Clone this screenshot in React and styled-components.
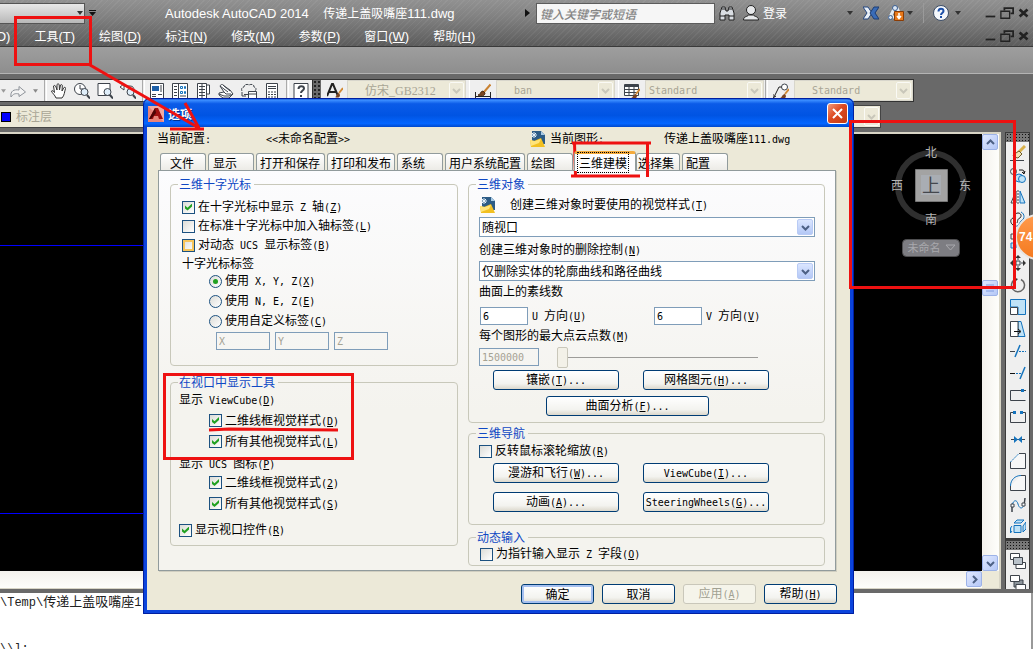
import React from "react";
import styled, { createGlobalStyle, css } from "styled-components";

const GlobalStyle = createGlobalStyle`
  *, *::before, *::after { box-sizing: border-box; }
  body { margin: 0; background: #6a6a6a; }
  button, input, select { margin: 0; font: inherit; color: inherit; }
`;

const cjk = `"Noto Sans CJK SC", sans-serif`;
const red = "#ee1111";

/* ---------- text with Latin runs and underlined access keys ---------- */

const Latin = styled.span`
  white-space: pre;
  ${(p) =>
    p.$ui
      ? css`font: 13px/16px "Liberation Sans", sans-serif;`
      : p.$large
        ? css`font: 12px/16px "Liberation Mono", monospace;`
        : css`font: 10px/16px "DejaVu Sans Mono", monospace;`}
`;

function Text({ children, ui, large }) {
  return children
    .split(/([\x20-\x7e]+)/)
    .filter(Boolean)
    .map((run, i) =>
      /^[\x20-\x7e]/.test(run) ? (
        <Latin key={i} $ui={ui} $large={large}>
          {run.split(/(&.)/).map((s, j) => (s[0] === "&" ? <u key={j}>{s[1]}</u> : s))}
        </Latin>
      ) : (
        <React.Fragment key={i}>{run}</React.Fragment>
      )
    );
}

/* ---------- application frame ---------- */

const Frame = styled.div`
  position: relative;
  display: flex;
  flex-direction: column;
  min-height: 100vh;
  overflow: hidden;
  background: #696969;
  font: 12px/16px ${cjk};
  color: #000;
`;

const Header = styled.header`
  height: 47px;
  border-bottom: 1px solid #3a3a3a;
  color: #fff;
  background:
    repeating-linear-gradient(135deg, rgba(255, 255, 255, 0.05) 0 1px, transparent 1px 4px),
    linear-gradient(#919191, #828282 35%, #5c5c5c);
`;

const TitleRow = styled.div`
  display: flex;
  align-items: center;
  height: 26px;
`;

const WorkspaceBox = styled.button`
  display: flex;
  justify-content: flex-end;
  align-items: center;
  width: 85px;
  height: 21px;
  padding: 0 1px;
  border: 1px solid #555;
  border-left: 0;
  background: linear-gradient(#e8e8e8, #b8b8b8);
`;

const PlainButton = styled.button`
  display: flex;
  align-items: center;
  justify-content: center;
  width: ${(p) => p.$w || 16}px;
  height: 20px;
  padding: 0;
  border: 0;
  background: none;
`;

const AppTitle = styled.h1`
  width: 358px;
  margin: 0 0 0 66px;
  font: 12px/16px ${cjk};
  white-space: pre;
`;

const Search = styled.input`
  width: 179px;
  height: 21px;
  margin-left: 4px;
  padding: 0 3px;
  border: 1px solid #5c5c5c;
  background: #f6f6f6;
  font: italic 500 12px/16px ${cjk};
  &::placeholder { color: #858585; opacity: 1; }
`;

const Spacer = styled.div`flex: 1;`;

const SignIn = styled.button`
  display: flex;
  align-items: center;
  gap: 4px;
  padding: 0;
  margin-left: 4px;
  border: 0;
  background: none;
`;

const Divider = styled.span`
  width: 1px;
  height: 20px;
  margin: 0 9px;
  background: #9a9a9a;
`;

const WindowControls = styled.div`
  display: flex;
  align-items: center;
  gap: 3px;
  padding-right: 2px;
`;

const WindowGap = styled.span`width: 16px;`;

const MenuRow = styled.nav`
  display: flex;
  align-items: center;
  gap: 24px;
  height: 20px;
  margin-left: -4px;
`;

const MenuLink = styled.a`
  color: #fff;
  text-decoration: none;
  white-space: nowrap;
`;

const Ribbon = styled.div`
  height: 27px;
  border-bottom: 1px solid #b4b4b4;
  background: linear-gradient(#9e9e9e, #8e8e8e);
`;

const ToolbarRow = styled.div`
  display: flex;
  height: 23px;
  margin-top: 5px;
`;

const Toolbar = styled.div`
  display: flex;
  align-items: stretch;
  border: solid #333;
  border-width: 1px 1px 1px 0;
  background: #efefef;
`;

const ToolCell = styled.button`
  display: flex;
  align-items: center;
  justify-content: center;
  width: ${(p) => p.$w || 23}px;
  padding: 0;
  border: 0;
  background: none;
`;

const ToolSeparator = styled.span`
  width: ${(p) => p.$w || 6}px;
  border-right: 1px solid #fff;
  background: linear-gradient(90deg, transparent 50%, #aaa 50%, #aaa 70%, transparent 70%);
`;

const ToolGrip = styled.span`
  width: 8px;
  margin-right: 1px;
  background:
    radial-gradient(circle, #222 1px, transparent 1px) 0 0 / 4px 4px,
    #6a6a6a;
`;

const StyleSelectBox = styled.span`
  display: grid;
  grid-template-columns: 1fr 17px;
  width: 119px;
  border: 1px solid #d8d6cc;
  background: #ece9d8;
  select {
    grid-area: 1 / 1 / 2 / 3;
    appearance: none;
    border: 0;
    padding: 0 17px 0 ${(p) => p.$pad}px;
    background: none;
    color: #a8a595;
    opacity: 1;
    font: ${(p) => (p.$mono ? `10px/16px "DejaVu Sans Mono", monospace` : `12px/16px "Liberation Serif", ${cjk}`)};
  }
`;

const DropGlyph = styled.span`
  grid-area: 1 / 2;
  display: flex;
  align-items: center;
  justify-content: center;
  margin: 1px;
  border: 1px solid ${(p) => (p.$live ? "#b9cbf5" : "#fafaf5")};
  border-radius: 2px;
  background: ${(p) => (p.$live ? "linear-gradient(#dbe6ff, #b4c8f6)" : "#ece9d8")};
  pointer-events: none;
`;

const LayerBar = styled.div`
  display: flex;
  align-items: center;
  width: 881px;
  height: 23px;
  margin-top: 3px;
  padding-left: 1px;
  border: solid #444;
  border-width: 1px 1px 1px 0;
  background: #ece9d8;
`;

const Swatch = styled.span`
  width: 10px;
  height: 10px;
  margin-right: 5px;
  border: 1px solid #000;
  background: #00f;
`;

const LayerSelect = styled(StyleSelectBox)`
  flex: 1;
  height: 21px;
  border: 0;
`;

/* ---------- drawing area ---------- */

const Workspace = styled.main`
  display: flex;
  flex: 1;
  margin-top: 4px;
  padding-bottom: 4px;
`;

const Drawing = styled.section`
  flex: 1;
  display: grid;
  grid-template: 1fr 17px / 1fr 17px;
  min-width: 0;
  border: solid #d8d5c6;
  border-width: 2px 2px 1px 0;
  margin-right: 4px;
`;

const Canvas = styled.div`
  display: flex;
  justify-content: flex-end;
  align-items: flex-start;
  padding: 7px 10px 0 0;
  background:
    linear-gradient(#0000ff, #0000ff) 0 111px / 50% 1px no-repeat,
    linear-gradient(#0000ff, #0000ff) 0 379px / 50% 1px no-repeat,
    #000;
`;

const VScroll = styled.div`
  display: flex;
  flex-direction: column;
  justify-content: space-between;
  background: linear-gradient(90deg, #f3f1ec, #fefefb);
`;

const HScroll = styled.div`
  display: flex;
  justify-content: flex-end;
  background: linear-gradient(#f3f1ec, #fefefb);
`;

const ScrollCorner = styled.div`background: #ece9d8;`;

const ScrollButton = styled.button`
  display: flex;
  align-items: center;
  justify-content: center;
  width: 16px;
  height: 16px;
  padding: 0;
  border: 1px solid #9db3e8;
  border-radius: 2px;
  background: linear-gradient(135deg, #dfe8ff, #b5c8f7);
`;

const Thumb = styled(ScrollButton)`
  margin-top: 12px;
  margin-bottom: 142px;
`;

const Palettes = styled.aside`
  display: flex;
  flex-direction: column;
  width: 25px;
  margin-right: 3px;
  background: #3a3a3a;
`;

const Palette = styled.div`
  display: flex;
  flex-direction: column;
  align-items: center;
  margin: 0 1px ${(p) => (p.$last ? 0 : 2)}px;
  border-top: 1px solid #3a3a3a;
  background: #efefef;
  ${(p) => p.$last && css`flex: 1; contain: size; overflow: hidden;`}
`;

const PaletteGrip = styled.span`
  flex: none;
  align-self: stretch;
  height: 9px;
  background:
    radial-gradient(circle, #111 1px, transparent 1px) 0 0 / 3px 3px,
    #777;
`;

const PaletteTool = styled.button`
  display: flex;
  flex: none;
  align-items: center;
  justify-content: center;
  width: 22px;
  height: 22px;
  padding: 0;
  border: 0;
  background: none;
`;

const CommandLine = styled.footer`
  height: 56px;
  overflow: hidden;
  border-right: 2px solid #999;
  background: #fff;
  font: 13px/16px ${cjk};
  color: #222;
  white-space: nowrap;
  p { margin: 0 0 28px; }
`;

/* ---------- options dialog ---------- */

const Dialog = styled.section`
  position: absolute;
  left: 143px;
  top: 98px;
  width: 711px;
  border: 4px solid #0b44dc;
  border-top: 0;
  border-radius: 7px 7px 0 0;
  outline: 1px solid #001ea0;
  outline-offset: -1px;
  background: #ece9d8;
`;

const DialogTitle = styled.header`
  display: flex;
  align-items: center;
  height: 29px;
  margin: 0 -4px;
  padding: 2px 6px 0 5px;
  border-radius: 6px 6px 0 0;
  background: linear-gradient(#0a42b8, #3a8cff 8%, #0b5be8 20%, #0054e3 60%, #0466ff 88%, #0048cc);
  h2 {
    flex: 1;
    margin: 0 0 0 4px;
    font: bold 12px/16px ${cjk};
    color: #fff;
    text-shadow: 1px 1px #00308f;
  }
`;

const CloseButton = styled.button`
  display: flex;
  align-items: center;
  justify-content: center;
  width: 21px;
  height: 21px;
  padding: 0;
  border: 1px solid #fff;
  border-radius: 3px;
  background: linear-gradient(135deg, #f09a7c, #dd4a22 45%, #c43a12);
`;

const ConfigRow = styled.div`
  display: grid;
  grid-template-columns: 109px 264px 20px 114px 1fr;
  align-items: center;
  height: 24px;
  padding-left: 10px;
`;

const TabStrip = styled.div`
  display: flex;
  align-items: flex-end;
  gap: 2px;
  height: 19px;
  padding-left: 13px;
`;

const Tab = styled.button`
  width: ${(p) => p.$w}px;
  height: ${(p) => (p.$active ? 20 : 17)}px;
  padding: 0 0 0 ${(p) => p.$pad || 4}px;
  border: 1px solid #919b9c;
  border-bottom: 0;
  border-radius: 3px 3px 0 0;
  background: linear-gradient(#fff, #ecebe6);
  line-height: 15px;
  text-align: left;
  white-space: nowrap;
  ${(p) =>
    p.$active &&
    css`
      margin: 0 -2px -1px -1px;
      border-top: 3px solid #f5ab3c;
      background: #fcfcfe;
      line-height: 14px;
      z-index: 1;
      span { outline: 1px dotted #000; outline-offset: 1px; }
    `}
`;

const Pane = styled.div`
  display: grid;
  grid-template-columns: 288px 357px;
  gap: 10px;
  margin: 0 14px 0 11px;
  padding: 5px 9px 5px 11px;
  height: 401px;
  border: 1px solid #919b9c;
  box-shadow: 1px 1px #d0cec0;
  background: linear-gradient(#fcfcfe, #f4f3ee 60%);
`;

const Column = styled.div`
  display: flex;
  flex-direction: column;
`;

const Group = styled.fieldset`
  min-width: 0;
  height: ${(p) => p.$h}px;
  margin: 0 0 ${(p) => p.$gap || 0}px;
  padding: 0 8px;
  border: 1px solid #c8c8ba;
  border-radius: 4px;
  legend {
    padding: 0 3px 0 1px;
    margin-left: -1px;
    height: 16px;
    color: #0f48c4;
  }
`;

const Row = styled.div`
  display: flex;
  align-items: center;
  height: ${(p) => p.$h || 20}px;
  margin-top: ${(p) => p.$mt || 0}px;
  padding-left: ${(p) => p.$indent || 0}px;
  gap: ${(p) => p.$gap || 0}px;
  white-space: nowrap;
`;

const CheckLabel = styled.label`
  display: flex;
  align-items: center;
  gap: 3px;
`;

const DirectionLabel = styled.label`
  flex: none;
  width: 118px;
`;

const Check = styled.input.attrs({ type: "checkbox" })`
  appearance: none;
  display: grid;
  place-content: center;
  width: 13px;
  height: 13px;
  border: 1px solid #1c5180;
  background: linear-gradient(135deg, #dcdcd7, #fff);
  ${(p) => p.$hot && css`box-shadow: inset 0 0 0 2px #f8c55a;`}
  &:checked::after {
    content: "";
    width: 7px;
    height: 7px;
    background: #21a121;
    clip-path: polygon(0 30%, 36% 60%, 100% 0, 100% 42%, 36% 100%, 0 72%);
  }
`;

const Radio = styled.input.attrs({ type: "radio" })`
  appearance: none;
  display: grid;
  place-content: center;
  width: 13px;
  height: 13px;
  border: 1px solid #1c5180;
  border-radius: 50%;
  background: linear-gradient(135deg, #dcdcd7, #fff);
  &:checked::after {
    content: "";
    width: 5px;
    height: 5px;
    border-radius: 50%;
    background: #21a121;
  }
`;

const Field = styled.input`
  flex: none;
  width: ${(p) => p.$w}px;
  height: 18px;
  padding: 0 2px;
  border: 1px solid #7f9db9;
  background: #fff;
  font: 10px/16px "DejaVu Sans Mono", monospace;
  &:disabled { background: transparent; color: #a5a293; }
`;

const ComboBox = styled.span`
  display: grid;
  grid-template-columns: 1fr 18px;
  width: 336px;
  height: 20px;
  border: 1px solid #7f9db9;
  background: #fff;
  select {
    grid-area: 1 / 1 / 2 / 3;
    appearance: none;
    padding: 0 18px 0 2px;
    border: 0;
    background: none;
  }
`;

const Slider = styled.input.attrs({ type: "range" })`
  appearance: none;
  width: 201px;
  height: 21px;
  margin-left: 18px;
  background: linear-gradient(#9d9c99, #9d9c99) 0 10px / 100% 1px no-repeat;
  &::-webkit-slider-thumb {
    appearance: none;
    width: 11px;
    height: 21px;
    border: 1px solid #c9c7ba;
    border-radius: 2px;
    background: #f3f1e8;
  }
`;

const CommandButton = styled.button`
  width: ${(p) => p.$w}px;
  height: 20px;
  padding: 0;
  border: 1px solid #003c74;
  border-radius: 3px;
  background: linear-gradient(#fff, #f3f3ef 70%, #dcd8cc);
  line-height: 16px;
  white-space: nowrap;
  ${(p) => p.$primary && css`box-shadow: inset 0 0 0 2px #a6c0f0;`}
  &:disabled { border-color: #c9c7ba; background: #f5f4ea; color: #a1a192; }
`;

const DialogFooter = styled.div`
  display: flex;
  justify-content: flex-end;
  gap: 8px;
  padding: 13px 13px 6px 0;
`;

/* ---------- things floating above the page ---------- */

const Markup = styled.svg`
  position: absolute;
  left: 0;
  top: 0;
  pointer-events: none;
`;

const Badge = styled.div`
  position: absolute;
  right: -28px;
  top: 214px;
  width: 46px;
  height: 46px;
  padding-left: 2px;
  border: 2px solid #e8e4e0;
  border-radius: 50%;
  background: linear-gradient(#ff9a4c, #f47a20);
  color: #fff;
  font: bold 12px/42px "Liberation Sans", sans-serif;
`;

/* ---------- icons ---------- */

function Icon({ size = 16, children, ...rest }) {
  return (
    <svg width={size} height={size} viewBox="0 0 16 16" fill="none" stroke="#3d434b" aria-hidden="true" {...rest}>
      {children}
    </svg>
  );
}

const Caret = ({ color = "#333", size = 6 }) => (
  <svg width={size} height="4" viewBox="0 0 6 4" aria-hidden="true">
    <path d="M0 0h6L3 4z" fill={color} />
  </svg>
);

const Chevron = ({ dir = "down", color = "#4d6185" }) => (
  <svg width="9" height="9" viewBox="0 0 9 9" aria-hidden="true">
    <path
      d={{ down: "M1 3l3.5 3.5L8 3", up: "M1 6l3.5-3.5L8 6", right: "M3 1l3.5 3.5L3 8" }[dir]}
      fill="none"
      stroke={color}
      strokeWidth="2"
    />
  </svg>
);

const blue = "#1473bd";
const pale = "#bfe2f7";
const brush = (
  <>
    <path d="M15.500 1.500L9 9" stroke="#c98232" strokeWidth="2" />
    <path d="M3 12c3 0 2-4 5-4l2 2c0 3-4 4-7 2z" fill="#7a4420" stroke="#4d2a10" />
  </>
);

const paletteIcons = {
  删除: (
    <>
      <path d="M0 15.500h14" />
      <path d="M15 1L8 8" stroke="#d8b04a" strokeWidth="3" />
      <path d="M9 6l3 3-4 4-4-1-1-2z" fill="#f2e6b8" stroke="#6d5a2c" />
    </>
  ),
  复制: (
    <>
      <circle cx="3.500" cy="4.500" r="3" />
      <path d="M9 3h3c2 0 2 1 2 3M12 5l2 2 1-3" stroke="#111" />
      <circle cx="9" cy="11" r="4" fill={pale} stroke={blue} />
      <circle cx="12" cy="12" r="3.500" fill={pale} stroke={blue} />
    </>
  ),
  镜像: (
    <>
      <path d="M6 2v12H1z" />
      <path d="M10 2v12h5z" fill={pale} stroke={blue} />
      <path d="M8 1v14" strokeDasharray="2 1" />
    </>
  ),
  偏移: (
    <>
      <path d="M3 14c-3-2-3-6 0-7 3 0 1-5 5-5 3 0 4 3 2 5-3 1-2 3-3 5" stroke="#222" />
      <path d="M5 15c4 1 4-3 6-5 4-2 4-7 0-9" stroke={blue} />
    </>
  ),
  阵列: (
    <>
      <path d="M1 1h5v5H1zM10 1h5v5h-5z" />
      <path d="M1 10h5v5H1zM10 10h5v5h-5z" fill={pale} stroke={blue} />
    </>
  ),
  移动: (
    <>
      <path d="M8 1v14M1 8h14" strokeDasharray="4 2 2 2 4" />
      <path d="M8 0l3 3H5zM8 16l3-3H5zM0 8l3-3v6zM16 8l-3-3v6z" fill="#333" stroke="none" />
      <path d="M6 6h4v4H6z" fill="#efefef" />
    </>
  ),
  旋转: (
    <>
      <path d="M11 2.500a6.500 6.500 0 1 1-6 0" stroke="#666" strokeWidth="1.500" />
      <path d="M3 0l5 2-4 4z" fill="#333" stroke="none" />
    </>
  ),
  缩放: (
    <>
      <path d="M.5 4V.5h15v15H8V8H.5z" fill={pale} stroke={blue} />
      <path d="M.5 8.500h7v7h-7z" fill="#fff" />
    </>
  ),
  拉伸: (
    <>
      <path d="M8 .5h3l4 15H8z" fill={pale} stroke={blue} />
      <path d="M.5.5H8v15H.5z" fill="#fff" />
      <path d="M4 10.500h6M8 8l3 2.500L8 13" stroke="#111" />
    </>
  ),
  修剪: (
    <>
      <path d="M0 8.500h5" />
      <path d="M5 14L10 2" stroke={blue} strokeWidth="1.500" />
      <path d="M9 8.500h7" stroke={blue} strokeDasharray="2 1" />
    </>
  ),
  延伸: (
    <>
      <path d="M0 8.500h5" stroke="#111" />
      <path d="M6 8.500h6" stroke={blue} strokeDasharray="2 1" />
      <path d="M10 14l5-12" stroke={blue} strokeWidth="1.500" />
    </>
  ),
  打断于点: (
    <>
      <path d="M11 3.500H.5v10h15" />
      <path d="M14 3.500h2" />
      <path d="M11 2h3v3h-3z" fill={blue} stroke="none" />
    </>
  ),
  打断: (
    <>
      <path d="M3 3.500H.5v10h15v-10H13" />
      <path d="M3 2h3v3H3zM10 2h3v3h-3z" fill={blue} stroke="none" />
    </>
  ),
  合并: (
    <>
      <path d="M1 8.500h14" />
      <path d="M4 5l4 3.500L4 12zM12 5L8 8.500l4 3.500z" fill={blue} stroke="none" />
    </>
  ),
  倒角: (
    <>
      <path d="M9 .5h6.500v15H.5V9" fill="#f7f7f7" />
      <path d="M.5 9L9 .5" stroke={blue} strokeDasharray="2 1" />
    </>
  ),
  圆角: (
    <>
      <path d="M11 .5h4.500v15H.5V11" fill="#f7f7f7" />
      <path d="M.5 11C.5 5 5 .5 11 .5" stroke={blue} />
    </>
  ),
  光顺曲线: (
    <>
      <path d="M2 15V8M14 9l1-8" strokeWidth="1.500" />
      <path d="M2 8c2-6 5-5 6-1s4 6 6 1" stroke={blue} />
      <path d="M1 7h3v3H1zM12 6h3v3h-3z" fill="#fff" />
    </>
  ),
  分解: (
    <>
      <path d="M4 6.500h7v7H4z" fill={pale} stroke={blue} />
      <path d="M4 4l3-3h7l-3 3zM13 7l3-4v7l-3 3zM2 7L.5 9v5L2 12" fill={pale} stroke={blue} />
    </>
  ),
};

const orderIcons = {
  前置: (
    <>
      <path d="M.5.500h9v6h-9zM6 9.500h9.500v6H6z" fill="#fff" />
      <path d="M3.500 4.500h9v7h-9z" fill="#b9c2ca" />
    </>
  ),
  后置: (
    <>
      <path d="M4 5h9v7H4z" fill="#8d959c" />
      <path d="M.5.500h9v6h-9zM6 9.500h9.500v6H6z" fill="#fff" />
    </>
  ),
};

const zoomLens = (
  <>
    <circle cx="10.500" cy="9" r="3.500" fill="#dfeefa" />
    <path d="M13 12l3 3.500" strokeWidth="2" />
  </>
);

const panIcons = {
  实时平移: (
    <path
      d="M5 15c-1-3-4-5-4.500-7 1-1 2 0 3 1.500L2.500 3c1-1 2-.5 2.500 1L6 7V1.500c1-1 2-.8 2.200.5L8.500 7l1-5c1-.8 2-.3 1.800 1L11 8l2-3.500c1-.5 1.800 0 1.500 1-1 3-1 7-3.500 9.500z"
      fill="#fff"
      stroke="#333"
    />
  ),
  实时缩放: (
    <>
      <circle cx="6" cy="6" r="5.500" fill="#fff" />
      <path d="M6 2v4h3" />
      {zoomLens}
    </>
  ),
  窗口缩放: (
    <>
      <path d="M1 .5h12v12H1z" fill="#fff" />
      {zoomLens}
    </>
  ),
  缩放上一个: (
    <>
      <path d="M0 4l4-3v2h6c3 0 4 2 4 4M4 3v4L0 4" fill="#fff" />
      {zoomLens}
    </>
  ),
};

const panelIcons = {
  特性: (
    <>
      <path d="M1.500.5h13v15h-13z" fill="#fff" />
      <path d="M3 3h7v5H3z" fill="#1c5fa8" stroke="none" />
      <path d="M3 11.500h4M9 11.500h4M3 13.500h4M12 2v7" />
    </>
  ),
  设计中心: (
    <>
      <path d="M.5.500h15v15H.5z" fill="#fff" />
      <path d="M2 3.500h3M2 6.500h3M2 9.500h3M2 12.500h3M6.500 1v14" />
      <path d="M8.500 3.500h2v2h-2zM12.500 3.500h1v2h-1zM8.500 8.500h2v2h-2zM12.500 8.500h1v2h-1z" stroke={blue} />
      <path d="M8 13h6" />
    </>
  ),
  工具选项板: (
    <>
      <path d="M2.500.500h9v15h-9zM11.500 2h3v9h-3" fill="#fff" />
      <path d="M4 3.500h6M4 6.500h6M4 9.500h6M4 12.500h6M7 1v14" />
    </>
  ),
  图纸集: (
    <>
      <path d="M2 3c1-2 3-2 4 0l6 4 3 4-4 4H5l-4-3v-2l5-1z" fill="#fff" />
      <path d="M2 3l8 6M5 2l7 6M1 11l5 2h5l4-2M6 9l2 2h5" />
    </>
  ),
  标记集: (
    <>
      <path d="M1 8C0 6 1 4 3 4c0-3 4-3 5-2 2-1 5-1 5 2 3 1 2 3 1 4" strokeDasharray="3 1" />
      <path d="M7.500 8.500h8v7h-8z" fill="#fff" />
      <path d="M7.500 11h8M1 9v4h4M3 11.500h4" />
    </>
  ),
  快速计算器: (
    <>
      <path d="M2.500.500h11v15h-11z" fill="#fff" />
      <path d="M4 3.500h8M4 5.500h8" />
      <path d="M4 9h8M4 11.500h8M4 14h8" strokeDasharray="2 1" />
    </>
  ),
};

const HelpTool = () => (
  <Icon>
    <path d="M1 .5h14v15H1z" fill="#fff" />
    <path d="M5.500 6c0-4 5.500-3.500 5.500-.5 0 2-3 2-3 4.500M8 12v2" strokeWidth="2" />
  </Icon>
);

const DwgIcon = () => (
  <Icon stroke="none">
    <path d="M2 0h9l4 4v9H2z" fill="#2d5c86" />
    <path d="M11 0l4 4h-4z" fill="#a9cbe6" />
    <path d="M0 9l4 1 7-3 4 9H1z" fill="#f2c021" />
    <path d="M0 9l5 1 6-2-2 4-8 3z" fill="#ffe47a" />
    <path d="M4 1v6M1 4h6M2 2l4 4M6 2L2 6" stroke="#e4f0fa" />
  </Icon>
);

const AutodeskIcon = () => (
  <Icon stroke="none">
    <path d="M0 0h16v16H0z" fill="#e8837a" />
    <path d="M0 0h16v16z" fill="#f0aaa2" />
    <path d="M1 13L7 2h3l5 11h-4l-1-3H6l-1 3z" fill="#a01010" />
    <path d="M7 2l1 5-5 6H1z" fill="#4d0505" />
  </Icon>
);

const controlIcons = {
  最小化: <path d="M3 12h11" stroke="#222" strokeWidth="2" />,
  还原: (
    <>
      <path d="M5 5V2.500h10v6h-3" stroke="#222" strokeWidth="2" />
      <path d="M1 6h10v8H1z" stroke="#222" strokeWidth="1.500" />
    </>
  ),
  关闭: <path d="M3 4l9 8M12 4l-9 8" stroke="#222" strokeWidth="3" />,
};

function Controls() {
  return (
    <WindowControls>
      {Object.entries(controlIcons).map(([name, art]) => (
        <PlainButton key={name} $w={14} aria-label={name}>
          <Icon size={14}>{art}</Icon>
        </PlainButton>
      ))}
    </WindowControls>
  );
}

/* ---------- sections ---------- */

function AppHeader() {
  return (
    <Header>
      <TitleRow>
        <WorkspaceBox aria-label="工作空间">
          <Caret />
        </WorkspaceBox>
        <PlainButton $w={14} aria-label="自定义快速访问工具栏">
          <svg width="7" height="6" viewBox="0 0 7 6">
            <path d="M0 0h7v1H0zM0 2h7L3.500 6z" fill="#111" />
          </svg>
        </PlainButton>
        <AppTitle>
          <Text ui>{"Autodesk AutoCAD 2014    传递上盖吸嘴座111.dwg"}</Text>
        </AppTitle>
        <PlainButton $w={9} aria-label="搜索选项">
          <svg width="5" height="8" viewBox="0 0 5 8">
            <path d="M0 0l5 4-5 4z" fill="#111" />
          </svg>
        </PlainButton>
        <Search placeholder="键入关键字或短语" aria-label="键入关键字或短语" />
        <PlainButton $w={24} aria-label="搜索">
          <Icon>
            <path d="M1 15V8l2-6h3l1 4h2l1-4h3l2 6v7h-5v-5H6v5z" fill="#d9dde2" stroke="#222" />
            <path d="M1 11h5M10 11h5M3 4h3M10 4h3" stroke="#222" />
          </Icon>
        </PlainButton>
        <SignIn>
          <Icon>
            <circle cx="8" cy="5" r="4.500" fill="#e6e8ea" stroke="#222" />
            <path d="M.5 15c0-4 4-3 5-5h5c1 2 5 1 5 5z" fill="#e6e8ea" stroke="#222" />
          </Icon>
          登录
        </SignIn>
        <Spacer />
        <PlainButton $w={12} aria-label="登录选项">
          <Caret />
        </PlainButton>
        <PlainButton $w={30} aria-label="Exchange">
          <Icon>
            <path d="M0 2h5l4 6-4 6H0l4-6z" fill="#e9f0f8" stroke="#23457e" />
            <path d="M16 2h-5L7 8l4 6h5l-4-6z" fill="#3a6cb8" stroke="#1d3d73" />
          </Icon>
        </PlainButton>
        <PlainButton $w={20} aria-label="通讯中心">
          <Icon>
            <path d="M7 2L2 12h11L9 3" stroke="#e3ebf4" strokeWidth="3" />
            <circle cx="7" cy="3" r="2.500" fill="#dce7f3" stroke="#3b5f92" />
            <circle cx="2.500" cy="12.500" r="2" fill="#dce7f3" stroke="#3b5f92" />
            <path d="M6.500 6.500h9v9h-9z" fill="#e8791b" stroke="#8a3c05" />
            <path d="M11 8v5M9 11l2 2.500 2-2.500" stroke="#fff" strokeWidth="1.500" />
          </Icon>
        </PlainButton>
        <PlainButton $w={8} aria-label="通讯选项">
          <Caret />
        </PlainButton>
        <Divider />
        <PlainButton aria-label="帮助">
          <Icon>
            <circle cx="8" cy="8" r="7.500" fill="#f4f7fb" stroke="#3c4d66" />
            <path d="M5.500 6.500c0-4 5-3.500 5-.5 0 2-2.500 2-2.500 4M8 11v2" stroke="#1d50a8" strokeWidth="2" />
          </Icon>
        </PlainButton>
        <PlainButton $w={18} aria-label="帮助选项">
          <Caret />
        </PlainButton>
        <WindowGap />
        <Controls />
      </TitleRow>
      <MenuRow aria-label="菜单栏">
        <MenuLink href="#format"><Text ui>{"O)"}</Text></MenuLink>
        {["工具(&T)", "绘图(&D)", "标注(&N)", "修改(&M)", "参数(&P)", "窗口(&W)", "帮助(&H)"].map((m) => (
          <MenuLink key={m} href="#menu"><Text ui>{m}</Text></MenuLink>
        ))}
        <Spacer />
        <Controls />
      </MenuRow>
    </Header>
  );
}

function StyleSelect({ name, value, mono, pad, as: Box = StyleSelectBox }) {
  return (
    <Box $mono={mono} $pad={pad}>
      <select aria-label={name} disabled>
        <option>{value}</option>
      </select>
      <DropGlyph><Chevron color="#c9c7ba" /></DropGlyph>
    </Box>
  );
}

function Toolbars() {
  return (
    <>
      <ToolbarRow>
        <Toolbar>
          <ToolCell $w={6} aria-label="放弃列表"><Caret size={5} color="#999" /></ToolCell>
          <ToolCell aria-label="重做">
            <Icon stroke="#8d9299">
              <path d="M1 14c-1-6 3-8 8-7V3.500L15.500 9 9 13.500V11c-4-1-6 0-8 3z" fill="#f4f4f4" />
            </Icon>
          </ToolCell>
          <ToolCell $w={13} aria-label="重做列表"><Caret size={5} color="#888" /></ToolCell>
          <ToolSeparator $w={5} />
          {Object.entries(panIcons).map(([n, art]) => (
            <ToolCell key={n} aria-label={n}><Icon>{art}</Icon></ToolCell>
          ))}
          <ToolSeparator />
          {Object.entries(panelIcons).map(([n, art]) => (
            <ToolCell key={n} aria-label={n}><Icon>{art}</Icon></ToolCell>
          ))}
          <ToolSeparator />
          <ToolCell aria-label="帮助"><HelpTool /></ToolCell>
        </Toolbar>
        <Toolbar>
          <ToolGrip />
          <ToolCell $w={25} aria-label="文字样式">
            <Icon>
              <path d="M0 13L5 1h1l5 12M2 9h7" stroke="#222" strokeWidth="2" />
              <path d="M16 5l-4 5" stroke="#d28a35" strokeWidth="2" />
              <path d="M8 14c2 0 1-4 4-4l1 2c0 3-3 3-5 2z" fill="#7a4420" stroke="none" />
            </Icon>
          </ToolCell>
          <StyleSelect name="文字样式" value="仿宋_GB2312" pad={17} />
          <ToolSeparator $w={4} />
          <ToolCell $w={26} aria-label="标注样式">
            <Icon>
              {brush}
              <path d="M.5 9v7M15.500 9v7M1 13.500h14" stroke="#222" />
            </Icon>
          </ToolCell>
          <StyleSelect name="标注样式" value="ban" mono pad={17} />
          <ToolSeparator $w={4} />
          <ToolCell $w={26} aria-label="表格样式">
            <Icon>
              <path d="M.5 1.500h14v11H.5z" fill="#fff" />
              <path d="M1 3h13" strokeWidth="2" />
              <path d="M1 6.500h13M1 9.500h13M5 2v10M10 2v10" />
              <path d="M16 6l-4 5" stroke="#d28a35" strokeWidth="2" />
              <path d="M7 15c2 0 2-4 5-4l1 2c0 3-4 3-6 2z" fill="#7a4420" stroke="none" />
            </Icon>
          </ToolCell>
          <StyleSelect name="表格样式" value="Standard" mono pad={3} />
          <ToolSeparator $w={4} />
          <ToolCell $w={26} aria-label="多重引线样式">
            <Icon>
              <circle cx="11.500" cy="4" r="3" fill="#fff" />
              <path d="M8.500 4H6L1 14M0 11v4l3-2" stroke="#222" />
              <path d="M16 6l-4 5" stroke="#d28a35" strokeWidth="2" />
              <path d="M7 15c2 0 2-4 5-4l1 2c0 3-4 3-6 2z" fill="#7a4420" stroke="none" />
            </Icon>
          </ToolCell>
          <StyleSelect name="多重引线样式" value="Standard" mono pad={17} />
        </Toolbar>
      </ToolbarRow>
      <LayerBar>
        <Swatch />
        <StyleSelect as={LayerSelect} name="图层" value="标注层" pad={0} />
      </LayerBar>
    </>
  );
}

function ViewCube() {
  return (
    <svg width="84" height="118" viewBox="0 -4 84 118" fontFamily="Noto Sans CJK SC, sans-serif" fontSize="12" textAnchor="middle">
      <circle cx="43" cy="41" r="33" fill="none" stroke="#2f2f2f" strokeWidth="6" />
      <g fill="#b4b4b4">
        <text x="43" y="12">北</text>
        <text x="43" y="79">南</text>
        <text x="9" y="45">西</text>
        <text x="77" y="45">东</text>
      </g>
      <path d="M27.500 24.500h32v32h-32z" fill="#a3a3a3" stroke="#777" />
      <path d="M33 30h20v20H33z" fill="#a9adb3" />
      <text x="43" y="47" fontSize="18" fill="#44474d">上</text>
      <rect x="14.500" y="94.500" width="57" height="17" rx="4" fill="#7d7d82" stroke="#4e4e50" />
      <text x="36" y="107" fontSize="11" fill="#a9a9ad">未命名</text>
      <path d="M58 100h9l-4.500 5z" fill="none" stroke="#a9a9ad" />
    </svg>
  );
}

function DrawingArea() {
  return (
    <Workspace>
      <Drawing aria-label="绘图区">
        <Canvas><ViewCube /></Canvas>
        <VScroll>
          <ScrollButton aria-label="向上滚动"><Chevron dir="up" /></ScrollButton>
          <Thumb aria-label="滚动块">
            <svg width="8" height="8" viewBox="0 0 8 8"><path d="M0 1h8M0 4h8M0 7h8" stroke="#7f9be0" /></svg>
          </Thumb>
          <ScrollButton aria-label="向下滚动"><Chevron /></ScrollButton>
        </VScroll>
        <HScroll>
          <ScrollButton aria-label="向右滚动"><Chevron dir="right" /></ScrollButton>
        </HScroll>
        <ScrollCorner />
      </Drawing>
      <Palettes>
        <Palette>
          <PaletteGrip />
          {Object.entries(paletteIcons).map(([n, art]) => (
            <PaletteTool key={n} aria-label={n}><Icon>{art}</Icon></PaletteTool>
          ))}
        </Palette>
        <Palette $last>
          <PaletteGrip />
          {Object.entries(orderIcons).map(([n, art]) => (
            <PaletteTool key={n} aria-label={n}><Icon>{art}</Icon></PaletteTool>
          ))}
        </Palette>
      </Palettes>
    </Workspace>
  );
}

function CheckRow({ children, checked, hot, ...row }) {
  return (
    <Row {...row}>
      <CheckLabel>
        <Check defaultChecked={checked} $hot={hot} />
        <span><Text>{children}</Text></span>
      </CheckLabel>
    </Row>
  );
}

function RadioRow({ children, checked }) {
  return (
    <Row $indent={30}>
      <CheckLabel>
        <Radio name="axis-label" defaultChecked={checked} />
        <span><Text>{children}</Text></span>
      </CheckLabel>
    </Row>
  );
}

function Combo({ id, value }) {
  return (
    <ComboBox>
      <select id={id}><option>{value}</option></select>
      <DropGlyph $live><Chevron /></DropGlyph>
    </ComboBox>
  );
}

const tabs = [
  ["文件", 46, 9],
  ["显示", 46],
  ["打开和保存", 69, 3],
  ["打印和发布", 68, 3],
  ["系统", 46, 3],
  ["用户系统配置", 80, 3],
  ["绘图", 46, 3],
  ["三维建模", 62, 4],
  ["选择集", 44, 1],
  ["配置", 46, 3],
];

function OptionsDialog() {
  return (
    <Dialog role="dialog" aria-labelledby="dialog-title">
      <DialogTitle>
        <AutodeskIcon />
        <h2 id="dialog-title">选项</h2>
        <CloseButton aria-label="关闭">
          <svg width="13" height="13" viewBox="0 0 13 13"><path d="M2 2l9 9M11 2l-9 9" stroke="#fff" strokeWidth="2" /></svg>
        </CloseButton>
      </DialogTitle>
      <ConfigRow>
        <span><Text>{"当前配置:"}</Text></span>
        <span><Text>{"<<未命名配置>>"}</Text></span>
        <DwgIcon />
        <span><Text>{"当前图形:"}</Text></span>
        <span><Text>{"传递上盖吸嘴座111.dwg"}</Text></span>
      </ConfigRow>
      <TabStrip role="tablist">
        {tabs.map(([name, w, pad]) => (
          <Tab key={name} role="tab" $w={w} $pad={pad} $active={name === "三维建模"} aria-selected={name === "三维建模"}>
            <span>{name}</span>
          </Tab>
        ))}
      </TabStrip>
      <Pane>
        <Column>
          <Group $h={190} $gap={8}>
            <legend>三维十字光标</legend>
            <CheckRow $indent={3} $mt={5} checked>{"在十字光标中显示 Z 轴(&Z)"}</CheckRow>
            <CheckRow $indent={3} $h={18}>{"在标准十字光标中加入轴标签(&L)"}</CheckRow>
            <CheckRow $indent={3} hot>{"对动态 UCS 显示标签(&B)"}</CheckRow>
            <Row $indent={3} $h={16}>十字光标标签</Row>
            <RadioRow checked>{"使用 X, Y, Z(&X)"}</RadioRow>
            <RadioRow>{"使用 N, E, Z(&E)"}</RadioRow>
            <RadioRow>{"使用自定义标签(&C)"}</RadioRow>
            <Row $indent={37} $gap={5}>
              {["X", "Y", "Z"].map((a) => (
                <Field key={a} $w={54} defaultValue={a} aria-label={`${a} 轴标签`} disabled />
              ))}
            </Row>
          </Group>
          <Group $h={172}>
            <legend>在视口中显示工具</legend>
            <Row><span><Text>{"显示 ViewCube(&D)"}</Text></span></Row>
            <CheckRow $indent={30} $h={21} checked>{"二维线框视觉样式(&D)"}</CheckRow>
            <CheckRow $indent={30} $h={21} checked>{"所有其他视觉样式(&L)"}</CheckRow>
            <Row $h={16} $mt={4}><span><Text>{"显示 UCS 图标(&P)"}</Text></span></Row>
            <CheckRow $indent={30} $h={21} checked>{"二维线框视觉样式(&2)"}</CheckRow>
            <CheckRow $indent={30} $h={21} checked>{"所有其他视觉样式(&S)"}</CheckRow>
            <CheckRow $indent={0} $mt={6} checked>{"显示视口控件(&R)"}</CheckRow>
          </Group>
        </Column>
        <Column>
          <Group $h={247} $gap={2}>
            <legend>三维对象</legend>
            <Row $mt={3} $indent={3} $gap={14}>
              <DwgIcon />
              <label htmlFor="visual-style"><Text>{"创建三维对象时要使用的视觉样式(&T)"}</Text></label>
            </Row>
            <Row $mt={2} $indent={2}><Combo id="visual-style" value="随视口" /></Row>
            <Row $mt={3} $indent={2}><label htmlFor="delete-control"><Text>{"创建三维对象时的删除控制(&N)"}</Text></label></Row>
            <Row $mt={1} $indent={2}><Combo id="delete-control" value="仅删除实体的轮廓曲线和路径曲线" /></Row>
            <Row $indent={2}>曲面上的素线数</Row>
            <Row $mt={5} $indent={3} $gap={4}>
              <Field id="iso-u" $w={48} defaultValue="6" />
              <DirectionLabel htmlFor="iso-u"><Text>{"U 方向(&U)"}</Text></DirectionLabel>
              <Field id="iso-v" $w={48} defaultValue="6" />
              <DirectionLabel htmlFor="iso-v"><Text>{"V 方向(&V)"}</Text></DirectionLabel>
            </Row>
            <Row $indent={2}><label htmlFor="cloud-points"><Text>{"每个图形的最大点云点数(&M)"}</Text></label></Row>
            <Row $h={22} $indent={2}>
              <Field id="cloud-points" $w={60} defaultValue="1500000" disabled />
              <Slider aria-label="最大点云点数" defaultValue={0} disabled />
            </Row>
            <Row $mt={2} $indent={16} $gap={24}>
              <CommandButton $w={126}><Text>{"镶嵌(&T)..."}</Text></CommandButton>
              <CommandButton $w={126}><Text>{"网格图元(&H)..."}</Text></CommandButton>
            </Row>
            <Row $mt={6} $indent={69}>
              <CommandButton $w={163}><Text>{"曲面分析(&F)..."}</Text></CommandButton>
            </Row>
          </Group>
          <Group $h={100} $gap={4}>
            <legend>三维导航</legend>
            <CheckRow $indent={2}>{"反转鼠标滚轮缩放(&R)"}</CheckRow>
            <Row $mt={2} $indent={16} $gap={24}>
              <CommandButton $w={126}><Text>{"漫游和飞行(&W)..."}</Text></CommandButton>
              <CommandButton $w={126}><Text>{"ViewCube(&I)..."}</Text></CommandButton>
            </Row>
            <Row $mt={9} $indent={16} $gap={24}>
              <CommandButton $w={126}><Text>{"动画(&A)..."}</Text></CommandButton>
              <CommandButton $w={126}><Text>{"SteeringWheels(&G)..."}</Text></CommandButton>
            </Row>
          </Group>
          <Group $h={37}>
            <legend>动态输入</legend>
            <CheckRow $indent={3} $h={18}>{"为指针输入显示 Z 字段(&O)"}</CheckRow>
          </Group>
        </Column>
      </Pane>
      <DialogFooter>
        <CommandButton $w={73} $primary>确定</CommandButton>
        <CommandButton $w={73}>取消</CommandButton>
        <CommandButton $w={73} disabled><Text>{"应用(&A)"}</Text></CommandButton>
        <CommandButton $w={73}><Text>{"帮助(&H)"}</Text></CommandButton>
      </DialogFooter>
    </Dialog>
  );
}

export default function App() {
  return (
    <Frame>
      <GlobalStyle />
      <AppHeader />
      <Ribbon />
      <Toolbars />
      <DrawingArea />
      <CommandLine>
        <p><Text large>{"\\Temp\\传递上盖吸嘴座1"}</Text></p>
        <p><Text large>{"\\\\l:"}</Text></p>
      </CommandLine>
      <OptionsDialog />
      <Badge>74</Badge>
      <Markup width="1033" height="649" fill="none" stroke={red} strokeWidth="3" aria-hidden="true">
        <path d="M15.500 17.500h75v47h-75z" />
        <path d="M90 65L199 128M185 103l14 25M170 129h34" />
        <path d="M164.500 374.500h188v84h-188z" />
        <path d="M209 430l20-1 109 1" />
        <path d="M572 143h79M574.500 143l1 33M571 176h69M647.500 143v34" />
        <path d="M850.500 121.500h164v166h-164z" />
      </Markup>
    </Frame>
  );
}
